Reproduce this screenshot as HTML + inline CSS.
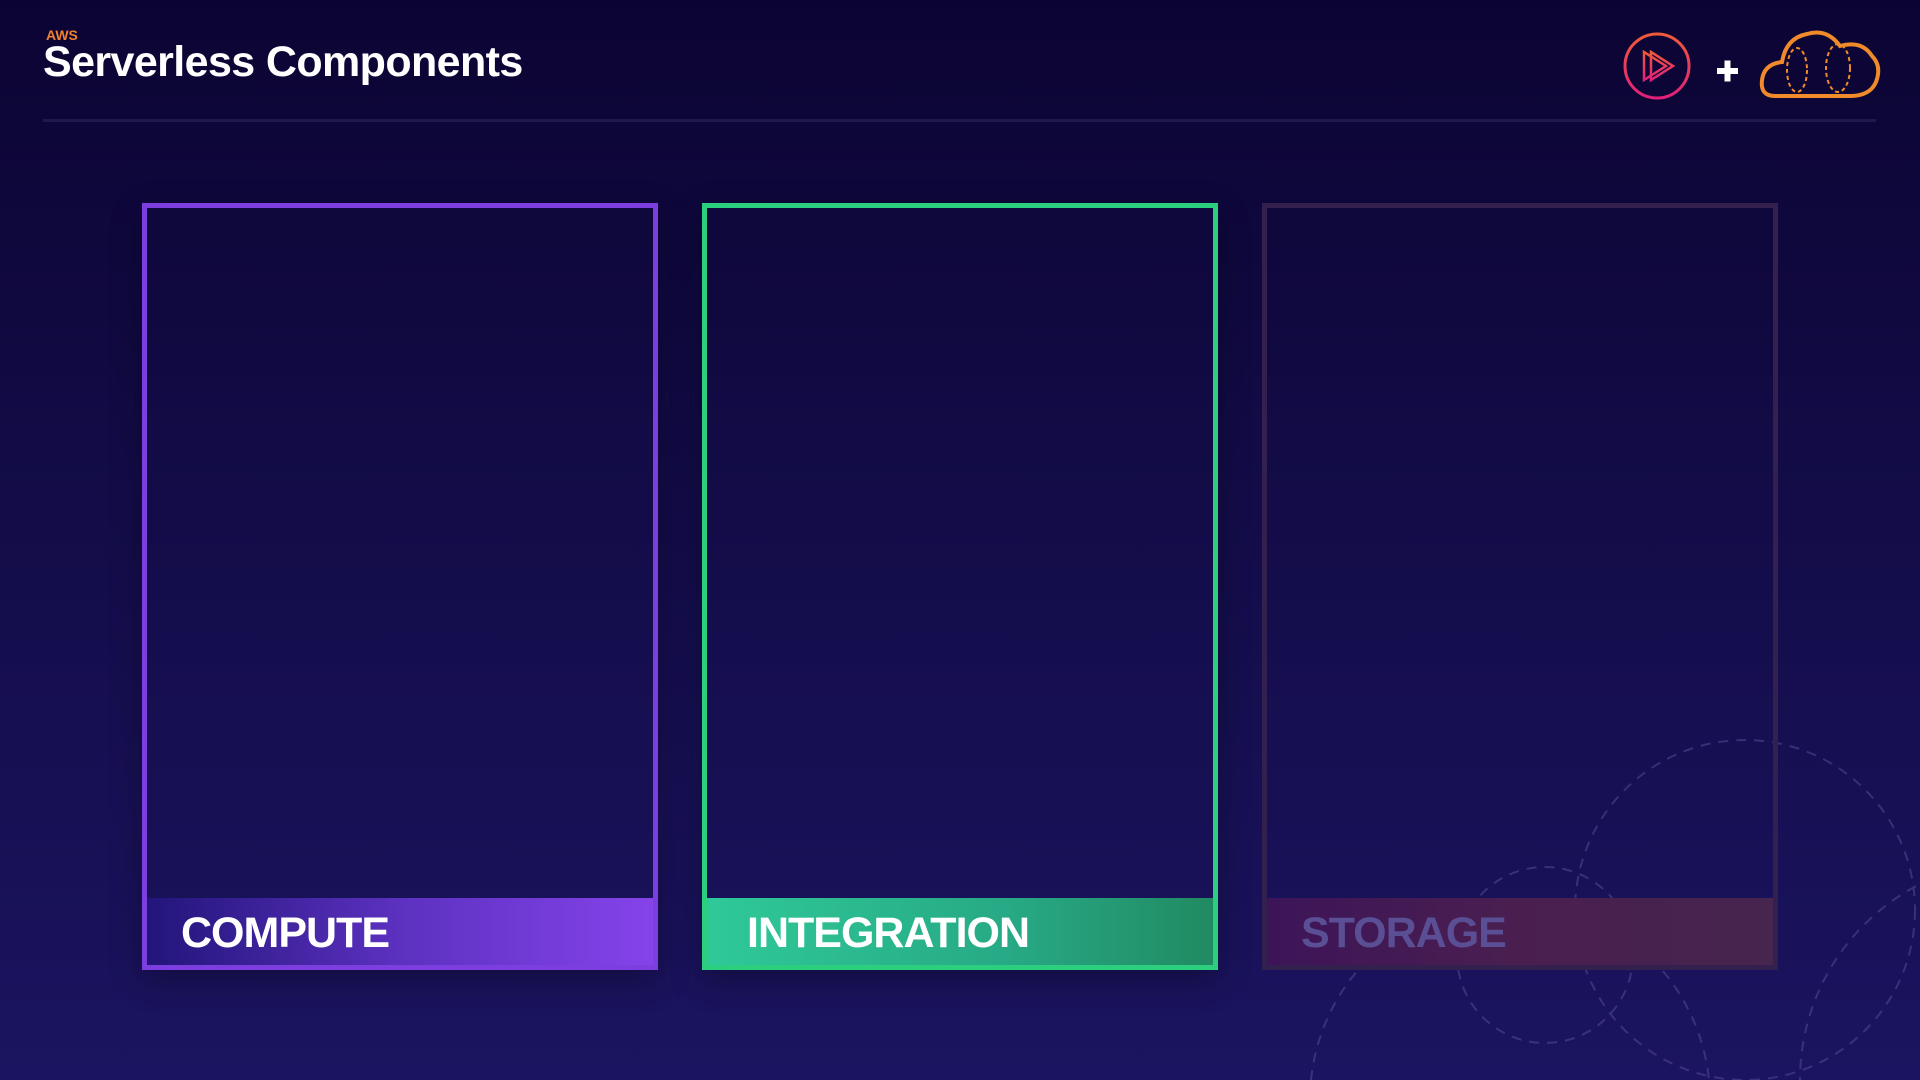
<!DOCTYPE html>
<html><head><meta charset="utf-8"><style>
*{margin:0;padding:0;box-sizing:border-box}
html{overflow:hidden;width:1920px;height:1080px}
body{width:1920px;height:1080px;overflow:hidden;background:linear-gradient(180deg,#0b0433 0%,#120b45 40%,#1b1460 100%);font-family:"Liberation Sans",sans-serif;position:relative}
.aws{position:absolute;left:46px;top:27px;color:#f0812f;font-weight:bold;font-size:14px}
.title{position:absolute;left:43px;top:38px;color:#fff;font-weight:bold;font-size:43px;letter-spacing:-0.6px}
.line{position:absolute;left:43px;top:119px;width:1833px;height:3px;background:#1f1a4e}
.card{position:absolute;top:203px;width:516px;height:767px;border:5px solid}
.bar{position:absolute;left:0;right:0;bottom:0;height:67px;font-weight:bold;font-size:43px;color:#fff;padding-left:34px;line-height:70px;letter-spacing:-1px}
</style></head><body>
<div class="aws">AWS</div>
<div class="title">Serverless Components</div>
<div class="line"></div>
<svg width="1920" height="1080" style="position:absolute;left:0;top:0" fill="none">
<g stroke="#5a4f9a" stroke-width="2" stroke-dasharray="10 8" opacity="0.5">
<circle cx="1545" cy="955" r="88"/>
<circle cx="1745" cy="910" r="170"/>
<circle cx="1510" cy="1100" r="200"/>
<circle cx="2020" cy="1080" r="220"/>
</g>
<defs><linearGradient id="pg" x1="0" y1="0" x2="0" y2="1"><stop offset="0" stop-color="#f05a3a"/><stop offset="1" stop-color="#e0207a"/></linearGradient></defs>
<circle cx="1657" cy="66" r="32" stroke="url(#pg)" stroke-width="3"/>
<path d="M1644 52 L1644 80 L1666 66 Z M1651 52 L1651 80 L1673 66 Z" stroke="url(#pg)" stroke-width="2.5"/>
<path d="M1717 71h21M1727.5 60.5v21" stroke="#fff" stroke-width="6"/>
<path d="M1775 96 Q1760 96 1762 80 Q1764 64 1782 62 Q1786 38 1807 34 Q1827 28 1840 46 Q1862 40 1872 56 Q1882 66 1876 82 Q1870 96 1850 96 Z" stroke="#f08a2a" stroke-width="4"/>
<g stroke="#f08a2a" stroke-width="2" stroke-dasharray="4 3">
<ellipse cx="1797" cy="70" rx="10" ry="22"/>
<ellipse cx="1838" cy="68" rx="12" ry="24"/>
</g>
</svg>
<div class="card" style="left:142px;border-color:#7d3ee0;box-shadow:0 10px 30px rgba(0,0,0,.3)">
<div class="bar" style="background:linear-gradient(90deg,#22157a,#5c31c0 50%,#8543ea)">COMPUTE</div></div>
<div class="card" style="left:702px;border-color:#2bcf7e;box-shadow:0 10px 30px rgba(0,0,0,.3)">
<div class="bar" style="background:linear-gradient(90deg,#2fc998,#27a985 60%,#218a62);padding-left:40px">INTEGRATION</div></div>
<div class="card" style="left:1262px;border-color:#33204f">
<div class="bar" style="background:linear-gradient(90deg,#3d1458,#4a1f50 50%,#46254e);color:#5a4f95">STORAGE</div></div>
</body></html>
